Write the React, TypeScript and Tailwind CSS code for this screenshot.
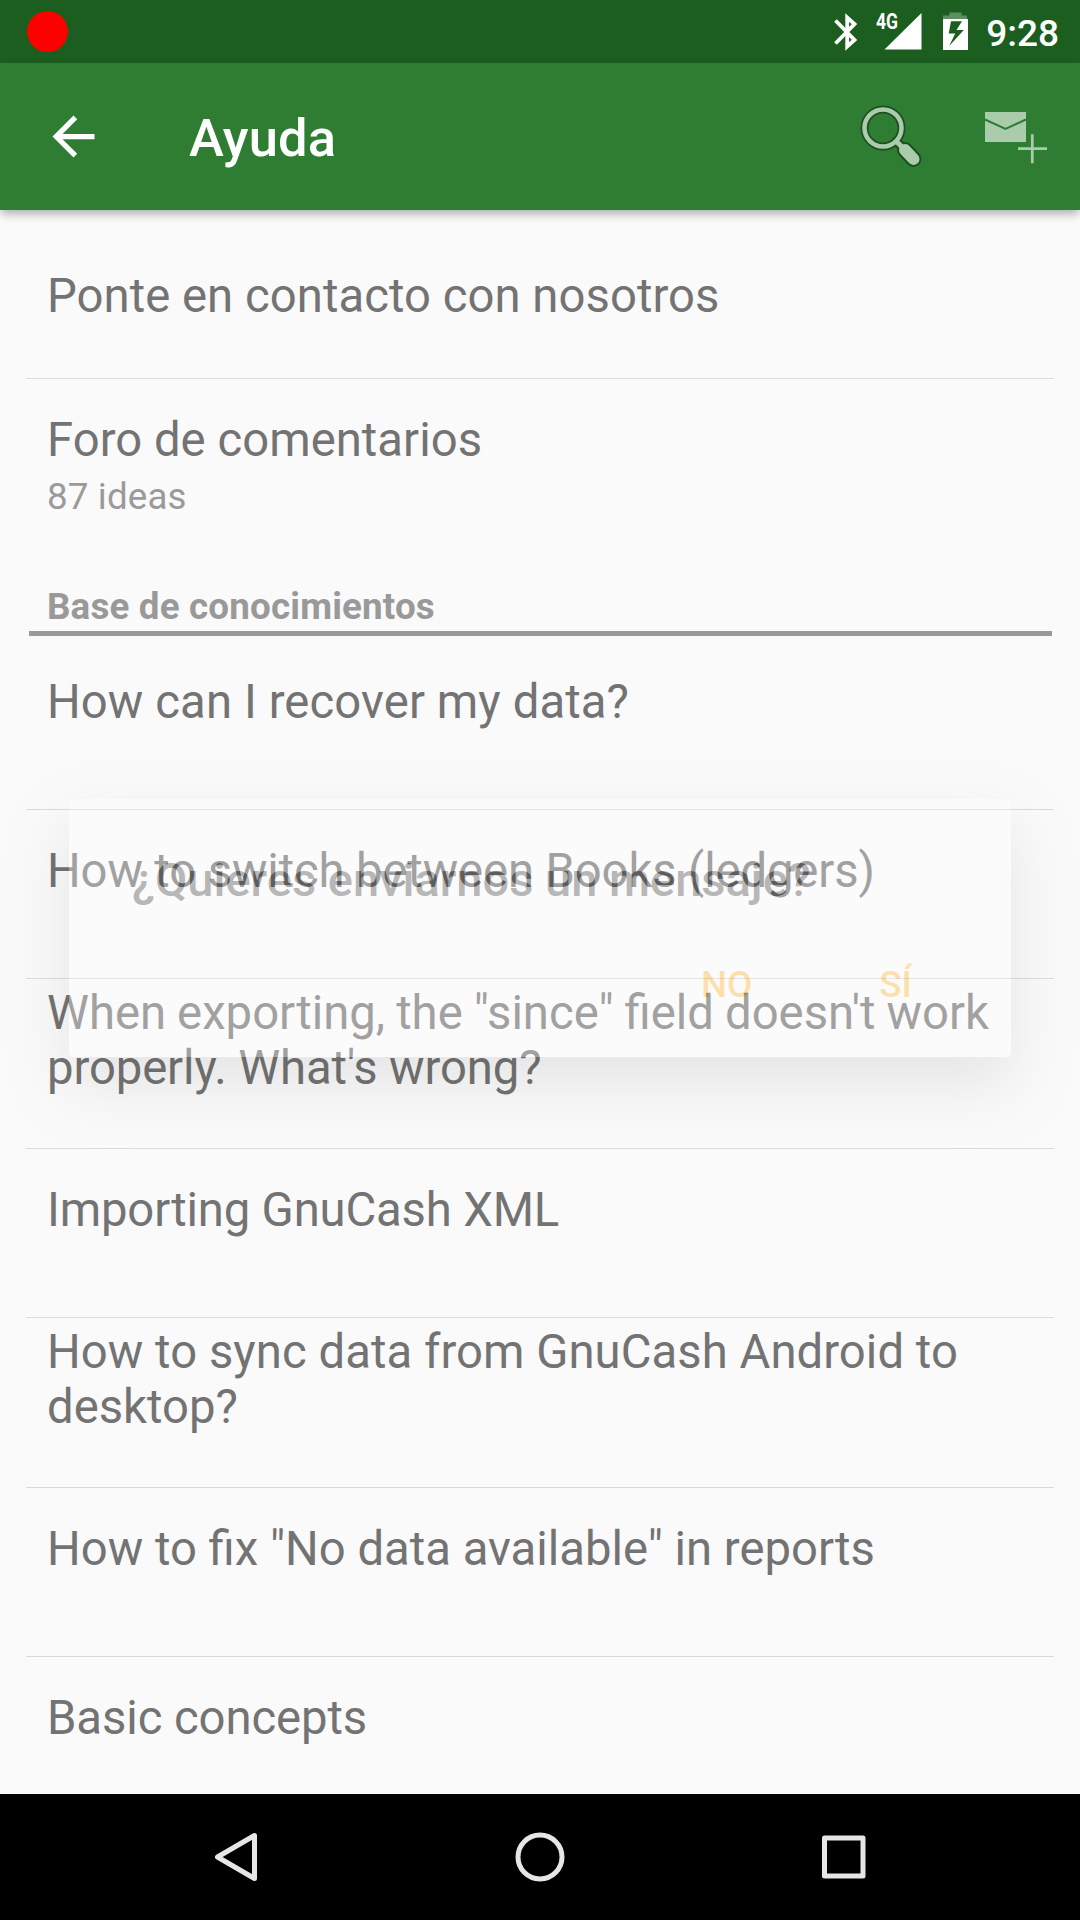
const rows = [
  { h: 'h-[174px]', pt: 'pt-[39px]', lines: [{ t: 'How can I recover my data?', s: 'tracking-[0.1px]' }] },
  { h: 'h-[169px]', pt: 'pt-[34px]', lines: [{ t: 'How to switch between Books (ledgers)', s: 'tracking-[-0.13px]' }] },
  {
    h: 'h-[170px]',
    pt: 'pt-[7px]',
    lines: [
      { t: 'When exporting, the "since" field doesn\'t work', s: '[word-spacing:-0.7px]' },
      { t: "properly. What's wrong?", s: 'tracking-[-0.1px]' },
    ],
  },
  { h: 'h-[169px]', pt: 'pt-[34px]', lines: [{ t: 'Importing GnuCash XML', s: 'tracking-[-0.16px]' }] },
  {
    h: 'h-[170px]',
    pt: 'pt-[7px]',
    lines: [
      { t: 'How to sync data from GnuCash Android to', s: 'tracking-[0.05px]' },
      { t: 'desktop?', s: '' },
    ],
  },
  { h: 'h-[169px]', pt: 'pt-[34px]', lines: [{ t: 'How to fix "No data available" in reports', s: '' }] },
  { h: 'h-[137px] border-b-0', pt: 'pt-[34px]', lines: [{ t: 'Basic concepts', s: 'tracking-[-0.09px]' }] },
];

function StatusBar() {
  return (
    <header className="flex h-[63px] items-center bg-[#1b5e20] pl-[27px] pr-[21px] text-white">
      <div className="size-[41px] rounded-full bg-[#ff0000]" />
      <svg className="ml-auto h-[63px] w-[140px]" viewBox="830 0 140 63" fill="none">
        <path d="M835.500 20.500 854.500 40l-7.300 6.500v-29l7.300 6.500L835.500 43.500" stroke="#fff" strokeWidth="3.800" />
        <path d="M921.500 13v36.500H884.500z" fill="#fff" />
        <path d="M949.500 12.500h12v3h5.500v3.500h-24v-3.500h6.500z" fill="#fff" fillOpacity=".3" />
        <path fillRule="evenodd" d="M943 19h25v31h-25zM951 21.300l-2.300 12.200h6.500l-6 12.500 14.600-16h-7.300l5.500-8.700z" fill="#fff" />
        <text x="876" y="29" fill="#fff" fontFamily="Roboto" fontWeight="700" fontSize="22" textLength="22" lengthAdjust="spacingAndGlyphs">4G</text>
      </svg>
      <span className="ml-[16px] pt-[4px] text-[37px] leading-[63px] font-medium">9:28</span>
    </header>
  );
}

function AppBar() {
  return (
    <div className="relative z-10 flex h-[147px] items-center bg-[#2e7d32] text-white shadow-[0_5px_9px_-1px_rgba(0,0,0,0.3)]">
      <svg className="ml-[42px] size-[63px]" viewBox="0 0 24 24" fill="#fff">
        <path d="M20 11H7.830l5.590-5.590L12 4l-8 8 8 8 1.410-1.410L7.830 13H20v-2z" />
      </svg>
      <h1 className="ml-[84px] pt-[3px] text-[52.5px] leading-[62px] font-medium tracking-[0.2px]">Ayuda</h1>
      <svg className="ml-auto h-[83px] w-[220px]" viewBox="850 95 220 83" fill="none">
        <g stroke="#1d5020" strokeLinecap="round">
          <circle cx="883" cy="128" r="18.500" strokeWidth="8" />
          <path d="M896.500 141.500l6 6" strokeWidth="9" />
          <path d="M905 150l8.500 9" strokeWidth="16" />
        </g>
        <g stroke="#abcbad">
          <circle cx="883" cy="128" r="18.500" strokeWidth="4.500" />
          <path d="M896 141l6 6" strokeWidth="5" />
          <path d="M905 150l8.500 9" strokeWidth="12" strokeLinecap="round" />
        </g>
        <path d="M985 112h41v30h-41z" fill="#abcbad" />
        <path d="M985 119.500l20.500 9.500 20.500-9.500" stroke="#2e7d32" strokeWidth="2" />
        <path d="M1018 148.700h29M1032.300 134.300v29" stroke="#abcbad" strokeWidth="2.700" />
      </svg>
      <div className="w-[10px]" />
    </div>
  );
}

function Dialog() {
  return (
    <div className="absolute top-[799px] left-[69px] z-20 h-[258px] w-[942px] rounded-[5px] bg-white pt-[53px] pr-[99px] pl-[63px] opacity-[0.33] shadow-[0_27px_60px_rgba(0,0,0,0.25)]">
      <h2 className="text-[47px] leading-[56px] font-medium whitespace-nowrap text-[#323232]">¿Quieres enviarnos un mensaje?</h2>
      <div className="mt-[55px] flex justify-end gap-[127px] text-[36.75px] leading-[44px] font-medium text-[#ffae11]">
        <button>NO</button>
        <button>SÍ</button>
      </div>
    </div>
  );
}

export default function App() {
  return (
    <div className="relative flex h-[1920px] w-[1080px] flex-col overflow-hidden bg-[#fafafa] font-['Roboto',sans-serif]">
      <StatusBar />
      <AppBar />
      <main className="flex flex-1 flex-col px-[26px] text-[47.25px] leading-[55px] text-[#737373]">
        <div className="h-[169px] border-b border-[#dadada] pt-[59px] pl-[21px] tracking-[0.04px]">Ponte en contacto con nosotros</div>
        <div className="h-[192px] pt-[34px] pl-[21px]">
          <div className="tracking-[0.03px]">Foro de comentarios</div>
          <div className="pt-[7px] text-[36.75px] leading-[43px] tracking-[0.15px] text-[#9a9a9a]">87 ideas</div>
        </div>
        <div className="mr-[2px] ml-[3px] h-[65px] border-b-[5px] border-[#999] pt-[14px] pl-[18px] text-[36.75px] leading-[43px] font-bold tracking-[0.17px] text-[#999]">
          Base de conocimientos
        </div>
        {rows.map((r) => (
          <div key={r.lines[0].t} className={`shrink-0 border-b border-[#dadada] pl-[21px] ${r.h} ${r.pt}`}>
            {r.lines.map((l) => (
              <div key={l.t} className={`whitespace-nowrap ${l.s}`}>{l.t}</div>
            ))}
          </div>
        ))}
      </main>
      <Dialog />
      <nav className="h-[126px] shrink-0 bg-black">
        <svg className="h-[126px] w-[1080px]" viewBox="0 1794 1080 126" fill="none" stroke="#e6e6e6" strokeWidth="5" strokeLinejoin="round">
          <path d="M254.500 1835.500v43L217.500 1857z" />
          <circle cx="540" cy="1857" r="22" />
          <rect x="824.500" y="1838" width="38.500" height="38" />
        </svg>
      </nav>
    </div>
  );
}
